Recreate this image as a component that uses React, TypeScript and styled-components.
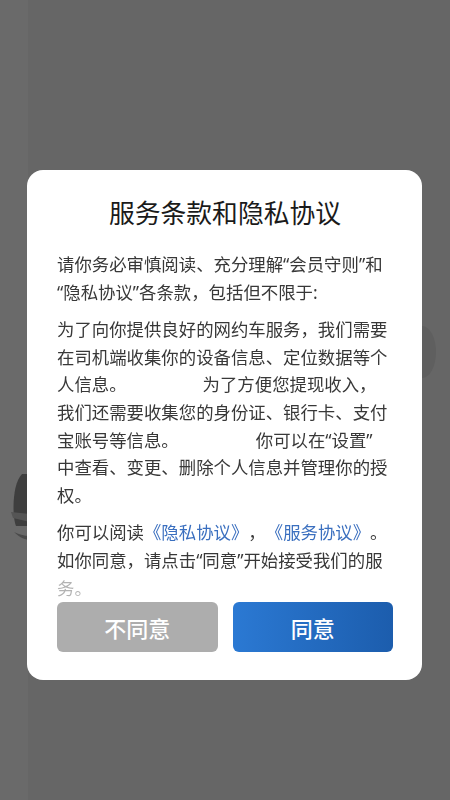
import React from 'react';
import styled, { createGlobalStyle } from 'styled-components';

const GlobalStyle = createGlobalStyle`
  html, body {
    margin: 0;
    padding: 0;
    background: #666666;
  }
  * {
    box-sizing: border-box;
  }
  body {
    font-family: 'Noto Sans', 'Noto Sans CJK SC', sans-serif;
    text-spacing-trim: space-all;
    text-autospace: no-autospace;
  }
`;

const Screen = styled.div`
  position: relative;
  width: 450px;
  height: 800px;
  overflow: hidden;
  background: #666666;
`;

/* dimmed page behind the dialog */
const Backdrop = styled.svg`
  position: absolute;
  inset: 0;
  width: 450px;
  height: 800px;
`;

const Overlay = styled.div`
  position: relative;
  display: flex;
  flex-direction: column;
  align-items: center;
  padding-top: 170px;
  height: 100%;
`;

const Dialog = styled.div`
  width: 395px;
  margin-left: -1px;
  background: #ffffff;
  border-radius: 16px;
  padding: 26px 29px 28px 30px;
  display: flex;
  flex-direction: column;
`;

const Title = styled.h1`
  margin: 0 0 23px;
  font-family: 'Noto Sans CJK SC', sans-serif;
  font-size: 25.8px;
  line-height: 32px;
  font-weight: 400;
  color: #1a1a1a;
  text-align: center;
`;

const Content = styled.div`
  display: flex;
  flex-direction: column;
  gap: 10px;
  margin-right: -6px;
  -webkit-mask-image: linear-gradient(to bottom, #000 calc(100% - 30px), rgba(0, 0, 0, 0.38) calc(100% - 22px));
  mask-image: linear-gradient(to bottom, #000 calc(100% - 30px), rgba(0, 0, 0, 0.38) calc(100% - 22px));
`;

const Para = styled.p`
  margin: 0;
  font-size: 17.4px;
  line-height: 27.6px;
  color: #383838;
  word-break: break-all;
  text-spacing-trim: space-all;
  text-autospace: no-autospace;
`;

const Gap = styled.span<{ $w: number }>`
  display: inline-block;
  width: ${(p) => p.$w}px;
`;

const Link = styled.span`
  color: #3a6fbf;
`;

const Actions = styled.div`
  display: flex;
  gap: 15px;
`;

const Btn = styled.button<{ $primary?: boolean }>`
  flex: 1;
  height: 50px;
  border: none;
  border-radius: 6px;
  font-family: 'Noto Sans CJK SC', 'Noto Sans', sans-serif;
  font-size: 22px;
  font-weight: 500;
  color: #ffffff;
  cursor: pointer;
  background: ${(p) => (p.$primary ? 'linear-gradient(90deg, #2b79d3 0%, #1c5dad 100%)' : '#adadad')};
`;

export default function App() {
  return (
    <>
      <GlobalStyle />
      <Screen>
        <Backdrop viewBox="0 0 450 800">
          <rect x="0" y="0" width="28" height="800" fill="#6a6a6a" />
          <path d="M22 474 C12 484 12 516 16 526 L30 526 L30 474 Z" fill="#3e3e3e" />
          <path d="M11 512 L30 514 L30 522 L13 518 Z" fill="#555555" />
          <path d="M14 532 C20 538 26 540 30 540 L30 536 C24 536 18 534 14 532 Z" fill="#4a4a4a" />
          <ellipse cx="422" cy="352" rx="14" ry="26" fill="#5f5f5f" />
        </Backdrop>
        <Overlay>
          <Dialog>
            <Title>服务条款和隐私协议</Title>
            <Content>
              <Para>
                请你务必审慎阅读、充分理解“会员守则”和
                <br />
                “隐私协议”各条款，包括但不限于:
              </Para>
              <Para>
                为了向你提供良好的网约车服务，我们需要在司机端收集你的设备信息、定位数据等个人信息。
                <Gap $w={76} />
                为了方便您提现收入，
                <br />
                我们还需要收集您的身份证、银行卡、支付宝账号等信息。
                <Gap $w={77} />
                你可以在“设置”
                <br />
                中查看、变更、删除个人信息并管理你的授权。
              </Para>
              <Para>
                你可以阅读<Link>《隐私协议》</Link>，<Link>《服务协议》</Link>。如你同意，请点击“同意”开始接受我们的服务。
              </Para>
            </Content>
            <Actions>
              <Btn>不同意</Btn>
              <Btn $primary>同意</Btn>
            </Actions>
          </Dialog>
        </Overlay>
      </Screen>
    </>
  );
}
